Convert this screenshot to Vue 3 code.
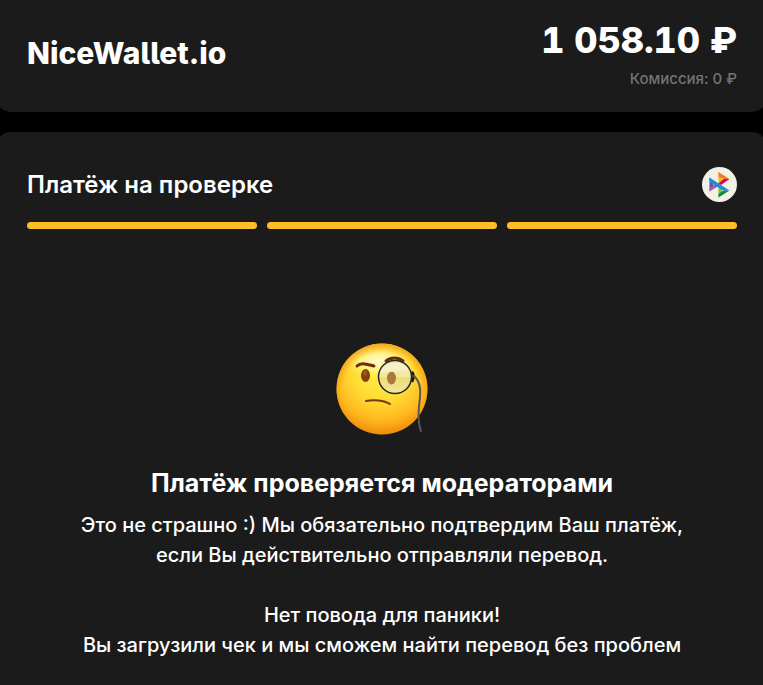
<template>
  <main class="page">
    <header class="card summary">
      <h1 class="brand">NiceWallet.io</h1>
      <div class="total">
        <p class="amount">1 058.10 ₽</p>
        <p class="fee">Комиссия: 0 ₽</p>
      </div>
    </header>

    <section class="card payment">
      <div class="payment-head">
        <h2 class="payment-title">Платёж на проверке</h2>
        <svg class="method" viewBox="0 0 35 35" role="img" aria-label="СБП">
          <circle cx="17.5" cy="17.5" r="17.5" fill="#f3f0e8" />
          <path d="M7.500 10.500v14l3.500-4v-6z" fill="#5b57a2" />
          <path d="M7.500 24.500l9-5.500-3.500-2-5.500 4z" fill="#a05baa" />
          <path d="M16.500 5v12.500l3.500-2.500v-5z" fill="#fab718" />
          <path d="M16.500 5l11 7h-6l-5-2.500z" fill="#ee7e22" />
          <path d="M27.500 12l-8.500 6-2.500-1.500 5-4.500z" fill="#d90751" />
          <path d="M16.500 18v12.500l3.500-4.500v-6z" fill="#8bbd2c" />
          <path d="M16.500 30.500l11-7h-6l-5 3.500z" fill="#0b8a3f" />
          <path d="M7.500 10.500l20 13h-6.500L7.500 15z" fill="#1d8fd6" />
        </svg>
      </div>

      <div class="steps">
        <span v-for="step in steps" :key="step" class="step"></span>
      </div>

      <div class="status">
        <svg class="face" viewBox="14 13 92 92" aria-hidden="true">
          <defs>
            <radialGradient id="skin" cx="0.5" cy="0.3" r="0.72">
              <stop offset="0" stop-color="#fff04a" />
              <stop offset="0.45" stop-color="#ffdc35" />
              <stop offset="0.75" stop-color="#ffb91e" />
              <stop offset="1" stop-color="#ed850b" />
            </radialGradient>
            <radialGradient id="shine">
              <stop offset="0" stop-color="#fffbd8" stop-opacity="0.95" />
              <stop offset="0.5" stop-color="#fff8a8" stop-opacity="0.7" />
              <stop offset="1" stop-color="#fff25a" stop-opacity="0" />
            </radialGradient>
            <radialGradient id="rim" cx="0.5" cy="0.54" r="0.54">
              <stop offset="0.8" stop-color="#f39a0d" stop-opacity="0" />
              <stop offset="1" stop-color="#ef930d" stop-opacity="0.75" />
            </radialGradient>
            <linearGradient id="lens" x1="0" y1="0" x2="0" y2="1">
              <stop offset="0" stop-color="#ece7bd" />
              <stop offset="0.5" stop-color="#f5e99b" />
              <stop offset="0.52" stop-color="#efdc75" />
              <stop offset="1" stop-color="#f3e6a0" />
            </linearGradient>
            <clipPath id="head">
              <circle cx="60" cy="59" r="45" />
            </clipPath>
          </defs>
          <circle cx="60" cy="59" r="45.500" fill="url(#skin)" />
          <ellipse cx="57" cy="31" rx="37" ry="17" fill="url(#shine)" clip-path="url(#head)" />
          <circle cx="60" cy="59" r="45.500" fill="url(#rim)" />
          <path d="M35 36C39 32 44 34 52 36" fill="none" stroke="#6b2e08" stroke-width="3" stroke-linecap="round" />
          <path d="M64 31C69 27 76 27 81 31" fill="none" stroke="#6b2e08" stroke-width="3" stroke-linecap="round" />
          <ellipse cx="43.500" cy="45.500" rx="4.500" ry="6.500" fill="#81410b" />
          <ellipse cx="43" cy="43" rx="2" ry="3" fill="#99551a" />
          <circle cx="73" cy="47" r="16.500" fill="url(#lens)" stroke="#252729" stroke-width="1.500" />
          <ellipse cx="69.500" cy="48" rx="4.500" ry="6.500" fill="#aa7b38" />
          <path d="M58 42C62 31 81 29 87 41C78 39 69 44 58 42z" fill="#fffdf0" opacity="0.4" />
          <path d="M44 71C51 69.500 62 70 68 74" fill="none" stroke="#773609" stroke-width="2" stroke-linecap="round" />
          <path d="M89.500 42C92 43 92.500 47 90 52" fill="none" stroke="#17191b" stroke-width="2.500" />
          <path d="M92 46C101 54 98 67 97 76C96 87 96 94 99 101" fill="none" stroke="#555759" stroke-width="2" stroke-linecap="round" />
        </svg>
        <h3 class="status-title">Платёж проверяется модераторами</h3>
        <p class="status-text">
          Это не страшно :) Мы обязательно подтвердим Ваш платёж,<br />
          если Вы действительно отправляли перевод.
        </p>
        <p class="status-text">
          Нет повода для паники!<br />
          Вы загрузили чек и мы сможем найти перевод без проблем
        </p>
      </div>
    </section>
  </main>
</template>

<script setup>
const steps = [1, 2, 3]
</script>

<style>
body { margin: 0; background: #000000; }
</style>

<style scoped>
h1, h2, h3, p { margin: 0; }
.page { display: grid; gap: 20px; overflow: hidden; font-family: Inter, "Noto Sans", sans-serif; color: #ffffff; }
.card { margin: 0 -4px; padding: 0 30px 0 31px; background: #1b1b1b; }
.summary { display: flex; justify-content: space-between; align-items: center; box-sizing: border-box; min-height: 112px; padding-bottom: 6px; border-radius: 0 0 15px 15px; }
.brand { font-size: 30px; line-height: 36px; font-weight: 800; font-feature-settings: "cv05"; }
.total { text-align: right; }
.amount { font-size: 36px; line-height: 48px; font-weight: 800; font-variant-numeric: tabular-nums; }
.fee { padding-top: 3px; font-size: 15px; line-height: 24px; font-weight: 500; color: #737373; }
.payment { padding-top: 35px; padding-bottom: 25px; border-radius: 15px 15px 0 0; }
.payment-head { display: flex; justify-content: space-between; align-items: center; }
.payment-title { font-size: 24px; line-height: 35px; font-weight: 600; }
.method { width: 35px; height: 35px; }
.steps { display: grid; grid-template-columns: repeat(3, 1fr); gap: 10px; margin-top: 20px; }
.step { height: 7px; border-radius: 4px; background: #fdbf24; }
.status { display: flex; flex-direction: column; align-items: center; padding-top: 114px; text-align: center; }
.face { width: 92px; height: 92px; }
.status-title { margin-top: 30px; font-size: 25px; line-height: 36px; font-weight: 700; }
.status-text { margin-top: 9px; font-size: 20px; line-height: 30px; font-weight: 500; }
.status-text + .status-text { margin-top: 30px; }
</style>
